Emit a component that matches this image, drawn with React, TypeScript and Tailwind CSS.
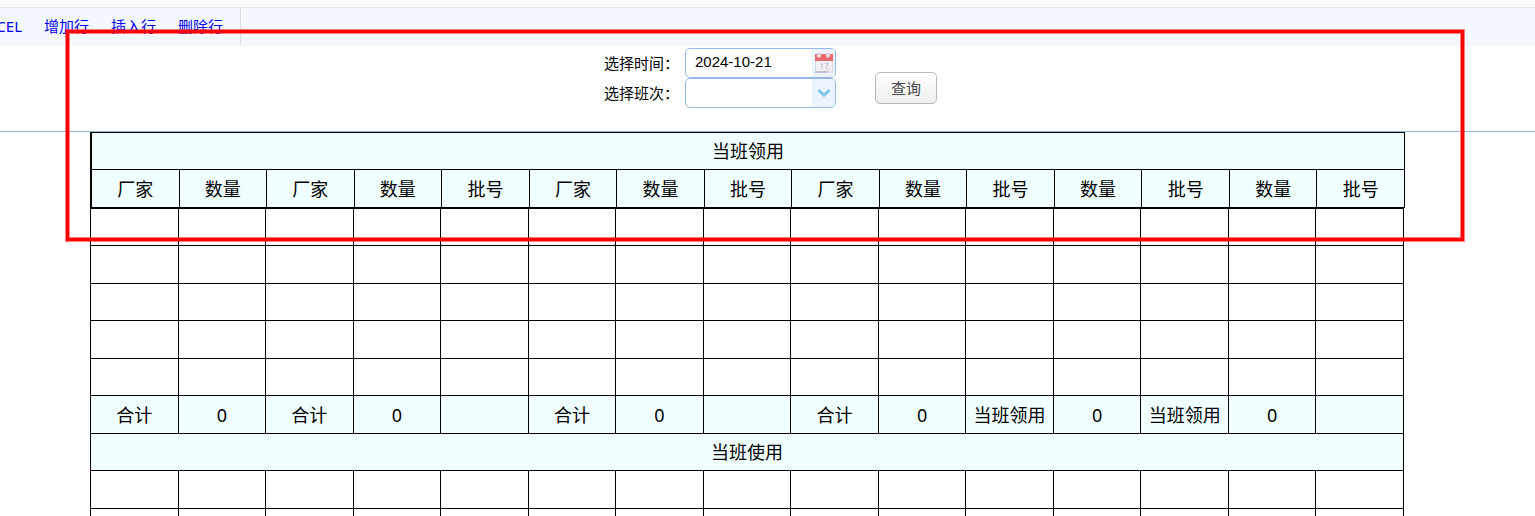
import React from "react";

const headers = [
    "厂家", "数量", "厂家", "数量", "批号", "厂家", "数量", "批号",
    "厂家", "数量", "批号", "数量", "批号", "数量", "批号",
];

const totals = [
    "合计", "0", "合计", "0", "", "合计", "0", "",
    "合计", "0", "当班领用", "0", "当班领用", "0", "",
];

const cell = "border-r border-b border-black p-0 text-center font-normal";
const row = "h-[37px] even:h-[38px]";

function EmptyRow() {
    return (
        <tr className={row}>
            {headers.map((_, i) => (
                <td key={i} className={cell}></td>
            ))}
        </tr>
    );
}

function CalendarIcon() {
    return (
        <svg width="20" height="22" viewBox="0 0 20 22" aria-hidden="true">
            <rect x="1" y="2" width="18" height="19" fill="#f4f1f6" />
            <path d="M1 2h18v7H1z" fill="#e8696d" />
            <path d="M1.500 9v11M18.500 9v11" stroke="#dcd8e2" />
            <rect x="1" y="19" width="18" height="2" fill="#c3bfc9" />
            <circle cx="5" cy="3.500" r="2.200" fill="#eee3ea" stroke="#d9979e" strokeWidth=".6" />
            <circle cx="14" cy="3.500" r="2.200" fill="#eee3ea" stroke="#d9979e" strokeWidth=".6" />
            <path d="M6.500 12.500l1.500-1v5.500M10.500 11.500h3.500l-2.200 5.500" fill="none" stroke="#c9c3d6" strokeWidth="1.200" />
            <path d="M13 21v-4.500h6V21z" fill="#e2dcea" />
            <path d="M14.500 17.500h3l-1.500 2.500" fill="none" stroke="#fff" strokeWidth=".9" />
        </svg>
    );
}

function Toolbar() {
    return (
        <header>
            <div className="h-2 border-b border-[#e8e8e8] bg-[#f7f9f8]"></div>
            <div className="flex h-[38px] bg-[#f4f8ff]">
                <nav className="flex items-center gap-[22px] border-r border-[#dddddd] pr-[17px] pb-[2px] text-[15px] whitespace-nowrap text-[#0000ee]">
                    <a href="#excel" className="flex w-[22px] justify-end">EXCEL</a>
                    <a href="#add">增加行</a>
                    <a href="#insert">插入行</a>
                    <a href="#delete">删除行</a>
                </nav>
            </div>
        </header>
    );
}

function SearchForm() {
    return (
        <form
            className="flex justify-center border-b border-[#98b4de] pt-[2px] pb-[23px] pl-[6px] text-[15px]"
            onSubmit={(e) => e.preventDefault()}
        >
            <div>
                <div className="flex h-[30px] items-center">
                    <label htmlFor="date" className="w-[81px] whitespace-nowrap">选择时间：</label>
                    <div className="flex h-full w-[151px] overflow-hidden rounded-[5px] border border-[#95b8e7] bg-white">
                        <input
                            id="date"
                            type="text"
                            defaultValue="2024-10-21"
                            className="min-w-0 flex-1 pb-[2px] pl-[9px] font-[family-name:'Liberation_Sans',sans-serif] outline-none"
                        />
                        <button type="button" aria-label="日历" className="flex w-[23px] items-center justify-center bg-[#eaf3ff]">
                            <CalendarIcon />
                        </button>
                    </div>
                </div>
                <div className="flex h-[30px] items-center">
                    <label htmlFor="shift" className="w-[81px] whitespace-nowrap">选择班次：</label>
                    <div className="relative flex h-full w-[151px] overflow-hidden rounded-[5px] border border-[#95b8e7] bg-white">
                        <select id="shift" className="w-full appearance-none pl-[9px] outline-none">
                            <option></option>
                        </select>
                        <span className="pointer-events-none absolute inset-y-0 right-0 flex w-[23px] items-center justify-center bg-[#eaf3ff]">
                            <svg width="14" height="10" viewBox="0 0 14 10" aria-hidden="true">
                                <path d="M1.500 2L7 7.300L12.500 2" fill="none" stroke="#73c5e5" strokeWidth="2.600" />
                            </svg>
                        </span>
                    </div>
                </div>
            </div>
            <button
                type="submit"
                className="mt-6 ml-[39px] h-8 w-[62px] rounded-[5px] border border-[#bbbbbb] bg-linear-to-b from-white to-[#eeeeee] text-[#444444]"
            >
                查询
            </button>
        </form>
    );
}

export default function App() {
    return (
        <div className="relative h-screen overflow-hidden bg-white font-[family-name:'Noto_Sans','Noto_Sans_CJK_SC',sans-serif] text-black">
            <Toolbar />
            <SearchForm />

            <main className="pr-[130px] pl-[90px] text-[18px] leading-6">
                <table className="w-full table-fixed border-separate border-spacing-0 border-t border-l-2 border-black bg-[#f0ffff]">
                    <thead>
                        <tr className={row}>
                            <th colSpan={15} className={cell}>当班领用</th>
                        </tr>
                        <tr className={row}>
                            {headers.map((h, i) => (
                                <th key={i} className={cell}>{h}</th>
                            ))}
                        </tr>
                    </thead>
                </table>
                <div className="pr-px">
                    <table className="w-full table-fixed border-separate border-spacing-0 border-t border-l border-black">
                        <tbody>
                            <EmptyRow />
                            <EmptyRow />
                            <EmptyRow />
                            <EmptyRow />
                            <EmptyRow />
                            <tr className={`${row} bg-[#f0ffff]`}>
                                {totals.map((t, i) => (
                                    <td key={i} className={cell}>{t}</td>
                                ))}
                            </tr>
                            <tr className={`${row} bg-[#f0ffff]`}>
                                <td colSpan={15} className={cell}>当班使用</td>
                            </tr>
                            <EmptyRow />
                            <EmptyRow />
                        </tbody>
                    </table>
                </div>
            </main>

            {/* highlight frame around the query area */}
            <div className="pointer-events-none absolute top-[30px] right-[71px] left-[66px] h-[211px] border-3 border-[#ff0000] shadow-[0_0_0_1px_#ff000080,inset_0_0_0_1px_#ff000080]"></div>
        </div>
    );
}
